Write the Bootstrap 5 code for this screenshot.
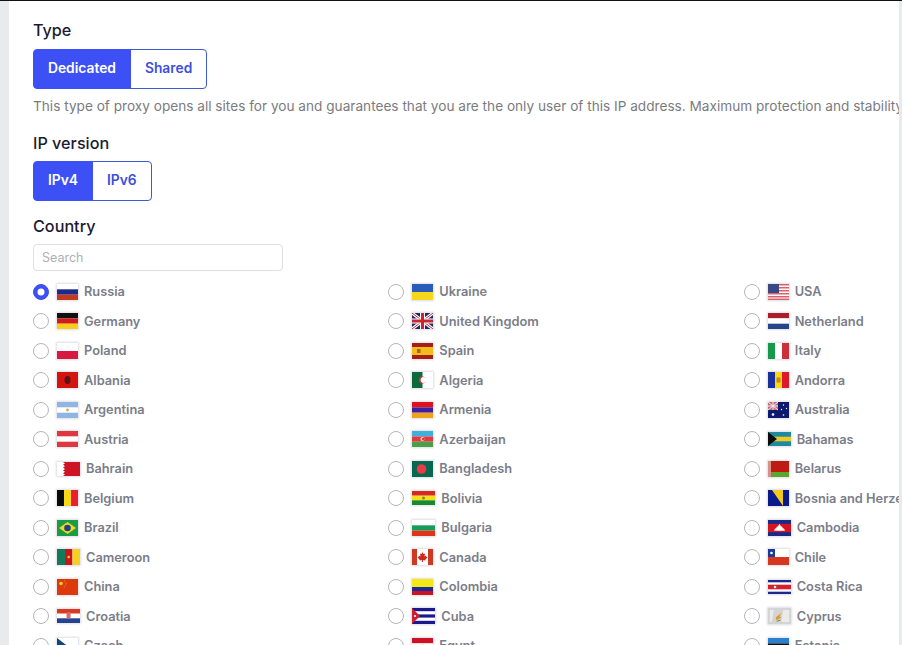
<!doctype html>
<html lang="en"><head><meta charset="utf-8"><title>Proxy order</title>
<link href="https://cdn.jsdelivr.net/npm/bootstrap@5.3.0/dist/css/bootstrap.min.css" rel="stylesheet">
<style>
html,body{height:645px;overflow:hidden}
body{background:#e9eaee;border-top:1px solid #111;font-family:Inter,"Noto Sans",sans-serif}
.sheet{background:#fff;margin:0 3px 0 9px;padding:17px 0 0 24px;height:644px;overflow:hidden}
.fld-title{font-size:16.2px;font-weight:500;line-height:24px;color:#1b1b2f;margin:0 0 6px}
.fld-title.first{margin-bottom:7px}
.fld-title.third{margin-top:13px}
.seg .btn{--bs-btn-color:#3d50d8;--bs-btn-border-color:#3d5bd0;--bs-btn-active-bg:#3d50f5;--bs-btn-active-border-color:#3d50f5;--bs-btn-active-color:#fff;--bs-btn-hover-bg:#3d50f5;--bs-btn-hover-border-color:#3d50f5;font-size:13.8px;font-weight:600;height:40px;padding:0 14px;line-height:37px;--bs-btn-border-radius:4px}
.hint{font-size:13.63px;line-height:20px;color:#7b7b7f;margin:7px 0 15px;white-space:nowrap}
.finder{width:250px;height:27px;font-size:12.5px;padding:0 8px;border-radius:4px;border-color:#dcdfe4;margin-bottom:6px}
.finder::placeholder{color:#adb0b5}
.grid-wide{width:1066px;--bs-gutter-x:0}
.place{height:29.5px;display:flex;align-items:center;white-space:nowrap}
.place .form-check-input{width:16px;height:16px;margin:0 7px 0 0;flex:none;border-color:#b4b6ba;--bs-form-check-bg:#fff}
.place .form-check-input:checked{background-color:#3d50f5;border-color:#3d50f5}
.place label{display:flex;align-items:center;font-size:12.8px;font-weight:600;color:#7b7d89}
.flagbox{display:block;flex:none;width:21px;height:16px;margin:0 6px 0 1px;box-shadow:0 0 2px 1px #dedee3}
.flagbox.wide{width:23px;height:14px}
.flagbox.tall{width:23px;height:16px}
</style></head><body>
<svg width="0" height="0" class="d-none" aria-hidden="true"><defs>
<symbol id="ru" viewBox="0 0 21 16" preserveAspectRatio="none"><rect width="21" height="16" fill="#fff"/><rect y="5.3" width="21" height="5.4" fill="#1c2a8c"/><rect y="10.7" width="21" height="5.3" fill="#c5391f"/></symbol>
<symbol id="ua" viewBox="0 0 21 16" preserveAspectRatio="none"><rect width="21" height="8" fill="#2a5bb8"/><rect y="8" width="21" height="8" fill="#f7d71c"/></symbol>
<symbol id="us" viewBox="0 0 21 16" preserveAspectRatio="none"><rect width="21" height="16" fill="#fff"/><path d="M0 0h21v1.6H0zM0 3h21v1.6H0zM0 6h21v1.6H0zM0 9h21v1.6H0zM0 12h21v1.6H0zM0 14.6h21v1.4H0z" fill="#d8606a"/><rect width="11" height="9" fill="#3a4785"/></symbol>
<symbol id="de" viewBox="0 0 21 16" preserveAspectRatio="none"><rect width="21" height="5.4" fill="#111"/><rect y="5.4" width="21" height="5.3" fill="#d31a1a"/><rect y="10.7" width="21" height="5.3" fill="#f5cf1c"/></symbol>
<symbol id="gb" viewBox="0 0 21 16" preserveAspectRatio="none"><rect width="21" height="16" fill="#1c2a6c"/><path d="M0 0L21 16M21 0L0 16" stroke="#fff" stroke-width="3"/><path d="M0 0L21 16M21 0L0 16" stroke="#c8252e" stroke-width="1"/><path d="M10.5 0v16M0 8h21" stroke="#fff" stroke-width="5"/><path d="M10.5 0v16M0 8h21" stroke="#c8252e" stroke-width="3"/></symbol>
<symbol id="nl" viewBox="0 0 21 16" preserveAspectRatio="none"><rect width="21" height="5.4" fill="#a81e2a"/><rect y="5.4" width="21" height="5.3" fill="#fff"/><rect y="10.7" width="21" height="5.3" fill="#26468c"/></symbol>
<symbol id="pl" viewBox="0 0 21 16" preserveAspectRatio="none"><rect width="21" height="8" fill="#fff"/><rect y="8" width="21" height="8" fill="#d9183f"/></symbol>
<symbol id="es" viewBox="0 0 21 16" preserveAspectRatio="none"><rect width="21" height="16" fill="#a81d18"/><rect y="4" width="21" height="8" fill="#f0bd1a"/><rect x="5" y="6" width="3.5" height="4" fill="#a8641a"/></symbol>
<symbol id="it" viewBox="0 0 21 16" preserveAspectRatio="none"><rect width="7" height="16" fill="#149a4a"/><rect x="7" width="7" height="16" fill="#fff"/><rect x="14" width="7" height="16" fill="#cf2f38"/></symbol>
<symbol id="al" viewBox="0 0 21 16" preserveAspectRatio="none"><rect width="21" height="16" fill="#d5130f"/><ellipse cx="10.5" cy="8" rx="3" ry="4" fill="#5a1512"/></symbol>
<symbol id="dz" viewBox="0 0 21 16" preserveAspectRatio="none"><rect width="21" height="16" fill="#fff"/><rect width="10.5" height="16" fill="#0c6a3a"/><circle cx="10.5" cy="8" r="3.6" fill="#c83a44"/><circle cx="11.6" cy="8" r="2.9" fill="#fff"/><path d="M11.6 5.100a2.900 2.900 0 0 0 0 5.800H10.500V5.100z" fill="#0c6a3a" opacity="0"/></symbol>
<symbol id="ad" viewBox="0 0 21 16" preserveAspectRatio="none"><rect width="7" height="16" fill="#1a2f9a"/><rect x="7" width="7" height="16" fill="#fbd90f"/><rect x="14" width="7" height="16" fill="#dd1a2a"/><rect x="8.5" y="5.5" width="4" height="5" fill="#c8822c"/></symbol>
<symbol id="ar" viewBox="0 0 21 16" preserveAspectRatio="none"><rect width="21" height="16" fill="#8fb6e0"/><rect y="5.3" width="21" height="5.4" fill="#fff"/><circle cx="10.5" cy="8" r="1.4" fill="#e0a93a"/></symbol>
<symbol id="am" viewBox="0 0 21 16" preserveAspectRatio="none"><rect width="21" height="5.4" fill="#e0101c"/><rect y="5.4" width="21" height="5.3" fill="#3a20a0"/><rect y="10.7" width="21" height="5.3" fill="#eda11c"/></symbol>
<symbol id="au" viewBox="0 0 21 16" preserveAspectRatio="none"><rect width="21" height="16" fill="#0c1a70"/><rect width="10" height="8" fill="#c56a7a"/><path d="M0 0L10 8M10 0L0 8M5 0v8M0 4h10" stroke="#eee" stroke-width="1"/><g fill="#fff"><circle cx="5" cy="12.5" r="1.3"/><circle cx="15.5" cy="3" r=".7"/><circle cx="18.5" cy="6.5" r=".7"/><circle cx="13.5" cy="7.5" r=".7"/><circle cx="15.5" cy="13" r=".8"/></g></symbol>
<symbol id="at" viewBox="0 0 21 16" preserveAspectRatio="none"><rect width="21" height="16" fill="#e0363f"/><rect y="5.3" width="21" height="5.4" fill="#fff"/></symbol>
<symbol id="az" viewBox="0 0 21 16" preserveAspectRatio="none"><rect width="21" height="5.4" fill="#3fb0dc"/><rect y="5.4" width="21" height="5.3" fill="#df3a3f"/><rect y="10.7" width="21" height="5.3" fill="#4a9f48"/><circle cx="10.5" cy="8" r="2" fill="#fff"/><circle cx="11.2" cy="8" r="1.5" fill="#df3a3f"/></symbol>
<symbol id="bs" viewBox="0 0 23 14" preserveAspectRatio="none"><rect width="23" height="14" fill="#1e8a9c"/><rect y="4.7" width="23" height="4.6" fill="#efc82c"/><path d="M0 0L9 7L0 14z" fill="#0a0a0a"/></symbol>
<symbol id="bh" viewBox="0 0 23 14" preserveAspectRatio="none"><rect width="23" height="14" fill="#cc1424"/><path d="M0 0h6l2 1.4-2 1.4 2 1.4-2 1.4 2 1.4-2 1.4 2 1.4-2 1.4 2 1.4-2 1.4H0z" fill="#fff"/></symbol>
<symbol id="bd" viewBox="0 0 21 16" preserveAspectRatio="none"><rect width="21" height="16" fill="#08674f"/><circle cx="9.5" cy="8" r="4.8" fill="#ea3a4a"/></symbol>
<symbol id="by" viewBox="0 0 21 16" preserveAspectRatio="none"><rect width="21" height="11" fill="#bc1a12"/><rect y="11" width="21" height="5" fill="#5ca52e"/><rect width="3" height="16" fill="#d8908a"/></symbol>
<symbol id="be" viewBox="0 0 21 16" preserveAspectRatio="none"><rect width="7" height="16" fill="#0a0a0a"/><rect x="7" width="7" height="16" fill="#f5d61c"/><rect x="14" width="7" height="16" fill="#ea2030"/></symbol>
<symbol id="bo" viewBox="0 0 23 14" preserveAspectRatio="none"><rect width="23" height="4.7" fill="#d6291f"/><rect y="4.7" width="23" height="4.6" fill="#f6e11f"/><rect y="9.3" width="23" height="4.7" fill="#198a2e"/><circle cx="11.5" cy="7" r="1.5" fill="#7f8a2a"/></symbol>
<symbol id="ba" viewBox="0 0 21 16" preserveAspectRatio="none"><rect width="21" height="16" fill="#0a1a8a"/><path d="M4 0h11v16z" fill="#f5c91c"/></symbol>
<symbol id="br" viewBox="0 0 21 16" preserveAspectRatio="none"><rect width="21" height="16" fill="#1a9b45"/><path d="M10.5 2L19 8l-8.5 6L2 8z" fill="#f4d81c"/><circle cx="10.5" cy="8" r="3.3" fill="#22408c"/></symbol>
<symbol id="bg" viewBox="0 0 23 15" preserveAspectRatio="none"><rect width="23" height="5" fill="#fff"/><rect y="5" width="23" height="5" fill="#1a9b5a"/><rect y="10" width="23" height="5" fill="#e0341a"/></symbol>
<symbol id="kh" viewBox="0 0 23 15" preserveAspectRatio="none"><rect width="23" height="15" fill="#1a2a8a"/><rect y="3.6" width="23" height="7.8" fill="#d6141f"/><path d="M6 10l1-2 1 0 1-2 1 0 1.5-2.5L13 6l1 0 1 2 1 0 1 2z" fill="#fff"/></symbol>
<symbol id="cm" viewBox="0 0 23 16" preserveAspectRatio="none"><rect width="8" height="16" fill="#117a5a"/><rect x="8" width="7.5" height="16" fill="#c8161f"/><rect x="15.5" width="7.5" height="16" fill="#f5cf22"/><circle cx="11.7" cy="8" r="1.3" fill="#f5cf22"/></symbol>
<symbol id="ca" viewBox="0 0 21 16" preserveAspectRatio="none"><rect width="21" height="16" fill="#fff"/><rect width="5" height="16" fill="#cc3a24"/><rect x="16" width="5" height="16" fill="#cc3a24"/><path d="M10.500 3l1 2 1.500-.5-.5 3 1.500-1 .5 1.500 1 .5-2 2-.2 1-2.300-.5v2h-1v-2l-2.300.5-.2-1-2-2 1-.5.5-1.500 1.500 1-.5-3 1.500.5z" fill="#cc2a1a"/></symbol>
<symbol id="cl" viewBox="0 0 21 16" preserveAspectRatio="none"><rect width="21" height="8" fill="#fff"/><rect y="8" width="21" height="8" fill="#d9361f"/><rect width="7" height="8" fill="#1a3a9c"/><circle cx="3.5" cy="4" r="1.3" fill="#fff"/></symbol>
<symbol id="cn" viewBox="0 0 21 16" preserveAspectRatio="none"><rect width="21" height="16" fill="#dc3a0c"/><circle cx="4" cy="4.5" r="1.8" fill="#f5d51c"/><g fill="#e8a01c"><circle cx="7.5" cy="2" r=".6"/><circle cx="9" cy="4" r=".6"/><circle cx="8.8" cy="6" r=".6"/><circle cx="7.3" cy="8" r=".6"/></g></symbol>
<symbol id="co" viewBox="0 0 21 16" preserveAspectRatio="none"><rect width="21" height="8" fill="#f5e616"/><rect y="8" width="21" height="4" fill="#1a2a9c"/><rect y="12" width="21" height="4" fill="#cc1420"/></symbol>
<symbol id="cr" viewBox="0 0 23 14" preserveAspectRatio="none"><rect width="23" height="14" fill="#1a2a8a"/><rect y="2.3" width="23" height="9.4" fill="#fff"/><rect y="4.7" width="23" height="4.6" fill="#d6222c"/><circle cx="7" cy="7" r="1.3" fill="#eee"/></symbol>
<symbol id="hr" viewBox="0 0 23 14" preserveAspectRatio="none"><rect width="23" height="4.7" fill="#dc3a20"/><rect y="4.7" width="23" height="4.6" fill="#fff"/><rect y="9.3" width="23" height="4.7" fill="#26438f"/><rect x="9.5" y="3" width="4" height="6.5" rx="1.5" fill="#d66a6a"/></symbol>
<symbol id="cu" viewBox="0 0 23 16" preserveAspectRatio="none"><rect width="23" height="16" fill="#1a1a8c"/><rect y="3.2" width="23" height="3.2" fill="#fff"/><rect y="9.6" width="23" height="3.2" fill="#fff"/><path d="M0 0l8 8-8 8z" fill="#cc1f2f"/><circle cx="3" cy="8" r="1.1" fill="#fff"/></symbol>
<symbol id="cy" viewBox="0 0 24 17" preserveAspectRatio="none"><rect width="24" height="17" fill="#d4d4d4"/><path d="M2 2h4l-2 13H2zM16 2h6v13h-8z" fill="#ebebeb"/><path d="M8 10l6-5-2 4 2 1-5 3z" fill="#e09a2c"/><path d="M9 14l4-1" stroke="#6c8a3a"/></symbol>
<symbol id="cz" viewBox="0 0 21 16" preserveAspectRatio="none"><rect width="21" height="8" fill="#fff"/><rect y="8" width="21" height="8" fill="#d7141a"/><path d="M0 0l10.5 8L0 16z" fill="#11457e"/></symbol>
<symbol id="eg" viewBox="0 0 21 16" preserveAspectRatio="none"><rect width="21" height="5.4" fill="#ce1126"/><rect y="5.4" width="21" height="5.3" fill="#fff"/><rect y="10.7" width="21" height="5.3" fill="#111"/><circle cx="10.5" cy="8" r="1.5" fill="#e0a030"/></symbol>
<symbol id="ee" viewBox="0 0 21 16" preserveAspectRatio="none"><rect width="21" height="5.4" fill="#2a80d0"/><rect y="5.4" width="21" height="5.3" fill="#111"/><rect y="10.7" width="21" height="5.3" fill="#fff"/></symbol>
</defs></svg>
<main class="sheet">
<p class="fld-title first">Type</p>
<div class="btn-group seg d-inline-flex" role="group" aria-label="Type">
<input type="radio" class="btn-check" name="ptype" id="t1" checked><label class="btn btn-outline-primary" for="t1">Dedicated</label>
<input type="radio" class="btn-check" name="ptype" id="t2"><label class="btn btn-outline-primary" for="t2">Shared</label>
</div>
<p class="hint">This type of proxy opens all sites for you and guarantees that you are the only user of this IP address. Maximum protection and stability</p>
<p class="fld-title">IP version</p>
<div class="btn-group seg d-inline-flex" role="group" aria-label="IP version">
<input type="radio" class="btn-check" name="ipv" id="v4" checked><label class="btn btn-outline-primary" for="v4">IPv4</label>
<input type="radio" class="btn-check" name="ipv" id="v6"><label class="btn btn-outline-primary" for="v6">IPv6</label>
</div>
<p class="fld-title third">Country</p>
<input type="text" class="form-control finder" placeholder="Search" aria-label="Search">
<div class="row grid-wide" id="countries"></div>
</main>
<script>
const list=[["Russia","ru"],["Ukraine","ua"],["USA","us"],["Germany","de"],["United Kingdom","gb"],["Netherland","nl"],["Poland","pl"],["Spain","es"],["Italy","it"],["Albania","al"],["Algeria","dz"],["Andorra","ad"],["Argentina","ar"],["Armenia","am"],["Australia","au"],["Austria","at"],["Azerbaijan","az"],["Bahamas","bs","wide"],["Bahrain","bh","wide"],["Bangladesh","bd"],["Belarus","by"],["Belgium","be"],["Bolivia","bo","wide"],["Bosnia and Herzegovina","ba"],["Brazil","br"],["Bulgaria","bg","tall"],["Cambodia","kh","tall"],["Cameroon","cm","tall"],["Canada","ca"],["Chile","cl"],["China","cn"],["Colombia","co"],["Costa Rica","cr","wide"],["Croatia","hr","wide"],["Cuba","cu","tall"],["Cyprus","cy","tall"],["Czech","cz"],["Egypt","eg"],["Estonia","ee"]];
document.getElementById('countries').innerHTML=list.map(([n,c,w],i)=>`<div class="col-4 place"><input class="form-check-input" type="radio" name="country" id="c${i}" ${i==0?'checked':''}><label for="c${i}"><svg class="flagbox ${w||''}" aria-hidden="true"><use href="#${c}"/></svg>${n}</label></div>`).join('');
</script>
<script src="https://cdn.jsdelivr.net/npm/bootstrap@5.3.0/dist/js/bootstrap.bundle.min.js"></script>
</body></html>
